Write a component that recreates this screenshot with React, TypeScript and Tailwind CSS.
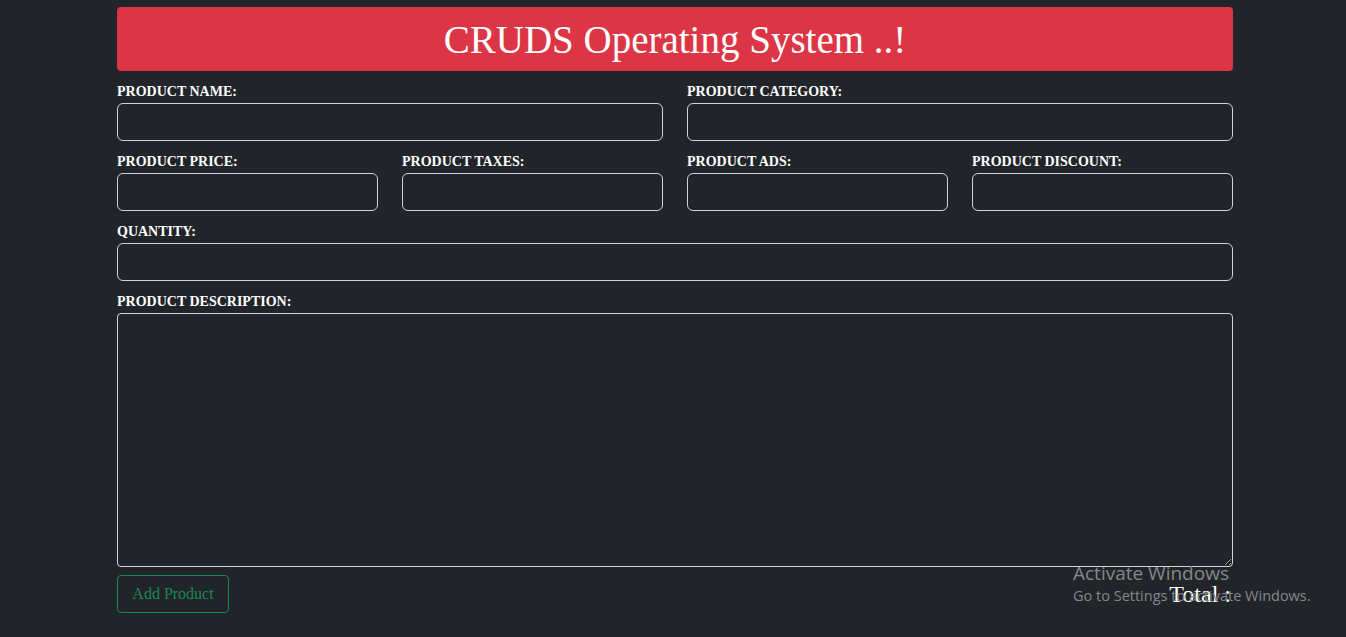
import React from "react";

const serif = { fontFamily: '"Liberation Serif", "DejaVu Serif", serif' };

function Field({ label, className = "" }: { label: string; className?: string }) {
  return (
    <div className={`flex flex-col ${className}`}>
      <label className="text-[14px] leading-[21px] pt-[1px] font-bold text-white uppercase mb-[1px]">{label}</label>
      <input className="h-[38px] w-full rounded-[6px] border border-[#ced4da] bg-transparent px-3 text-white outline-none" />
    </div>
  );
}

export default function App() {
  return (
    <div className="min-h-[637px] w-full bg-[#212529] relative" style={serif}>
      <div className="w-[1116px] ml-[117px] pt-[7px]">
        <div className="h-[64px] rounded-[4px] bg-[#dc3545] flex items-center justify-center">
          <h1 className="text-[39px] leading-none text-white">CRUDS Operating System ..!</h1>
        </div>

        <div className="grid grid-cols-2 gap-x-[24px] pt-[9px]">
          <Field label="Product Name:" />
          <Field label="Product Category:" />
        </div>

        <div className="grid grid-cols-4 gap-x-[24px] pt-[9px]">
          <Field label="Product Price:" />
          <Field label="Product Taxes:" />
          <Field label="Product Ads:" />
          <Field label="Product Discount:" />
        </div>

        <div className="pt-[9px]">
          <Field label="Quantity:" />
        </div>

        <div className="pt-[9px] flex flex-col">
          <label className="text-[14px] leading-[21px] pt-[1px] font-bold text-white uppercase mb-[1px]">Product Description:</label>
          <textarea className="h-[254px] w-full rounded-[4px] border border-[#ced4da] bg-transparent p-2 text-white outline-none block" />
        </div>

        <div className="flex items-center justify-between pt-[8px]">
          <button className="h-[38px] w-[112px] rounded-[4px] border border-[#198754] text-[#198754] text-[16px]">
            Add Product
          </button>
          <h4 className="text-[24px] leading-none text-white font-medium mr-[2px]">Total :</h4>
        </div>
      </div>

      <div
        className="absolute left-[1073px] top-[562px] text-[#85878a] pointer-events-none"
        style={{ fontFamily: '"Open Sans", "Noto Sans", sans-serif' }}
      >
        <div className="text-[19px] leading-[23px]">Activate Windows</div>
        <div className="text-[14.5px] leading-[22px]">Go to Settings to activate Windows.</div>
      </div>
    </div>
  );
}
